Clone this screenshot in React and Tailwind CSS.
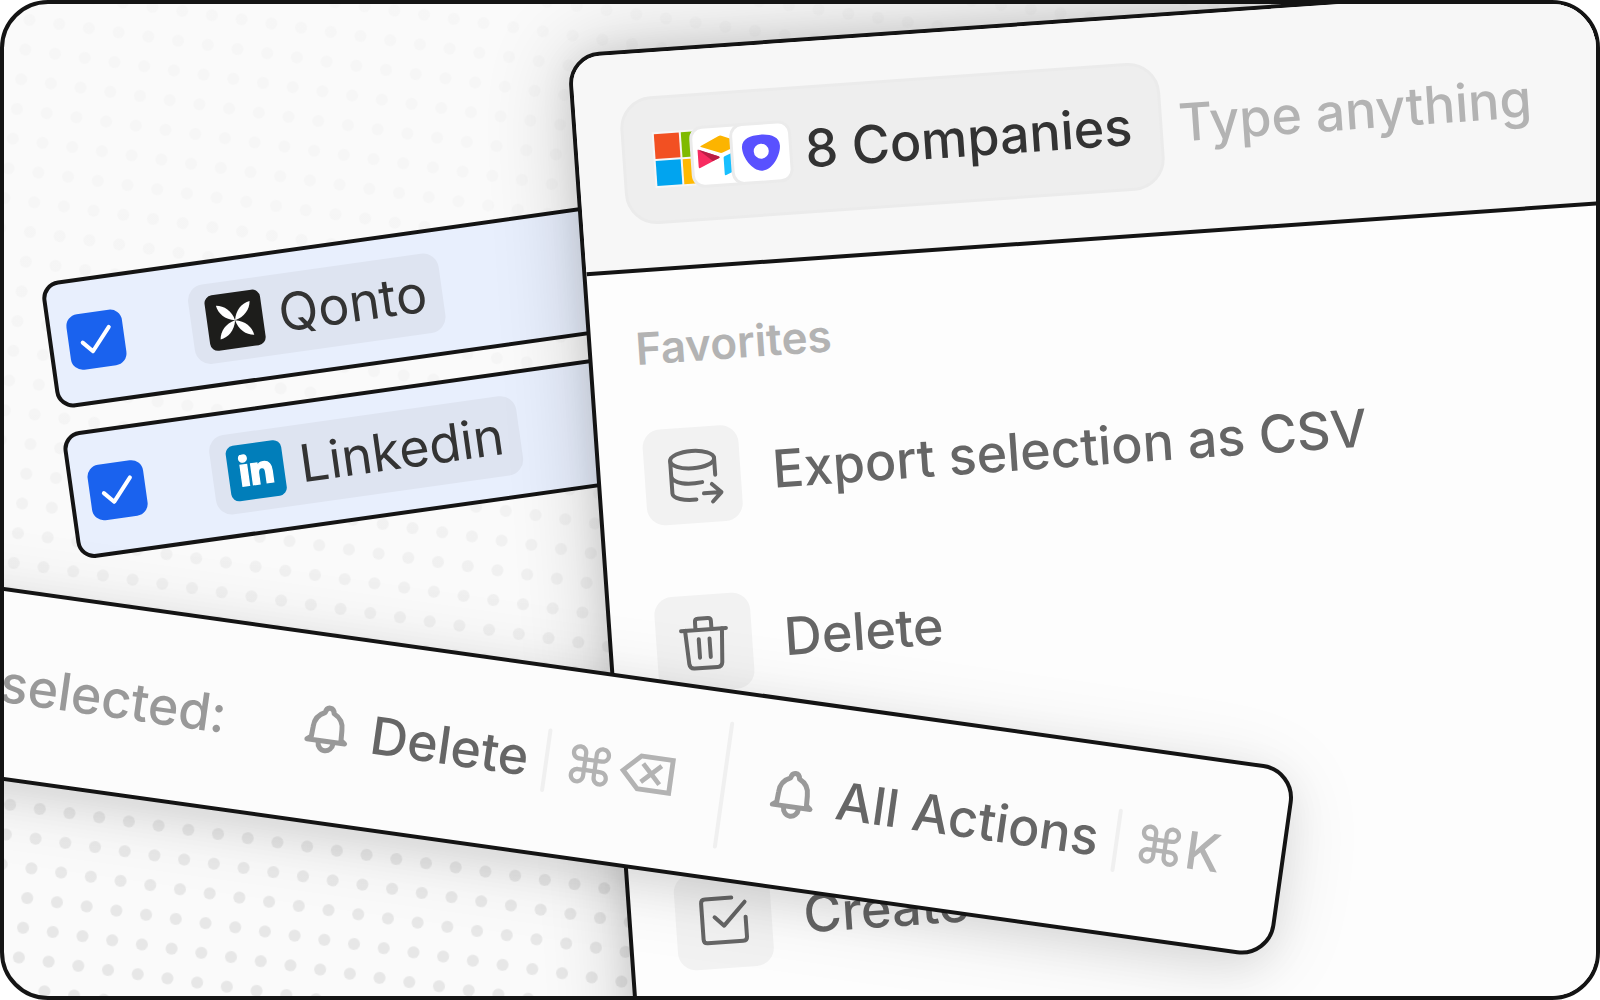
import React from "react";
import { FaLinkedinIn } from "react-icons/fa";

function DotGrid() {
  return (
    <svg className="absolute inset-0 h-full w-full" aria-hidden="true">
      <defs>
        <pattern
          id="dots"
          width="30"
          height="30"
          patternUnits="userSpaceOnUse"
          patternTransform="translate(23 788) rotate(8)"
        >
          <circle cx="15" cy="15" r="6" fill="#000" />
        </pattern>
        <linearGradient id="fade" x1="0" y1="0" x2="0" y2="1">
          <stop offset="0" stopColor="#fff" stopOpacity="0.015" />
          <stop offset="0.4" stopColor="#fff" stopOpacity="0.02" />
          <stop offset="0.9" stopColor="#fff" stopOpacity="0.075" />
        </linearGradient>
        <mask id="fadeMask">
          <rect width="100%" height="100%" fill="url(#fade)" />
        </mask>
      </defs>
      <rect width="100%" height="100%" fill="url(#dots)" mask="url(#fadeMask)" />
    </svg>
  );
}

function QontoLogo() {
  const petal = "M0 0C-10 -2 -16 -9 -17 -17C-9 -16 -2 -10 0 0Z";
  return (
    <svg viewBox="-28 -28 56 56" className="size-14 rounded-lg bg-[#1d1d1b]" aria-hidden="true">
      <g fill="#fff">
        <path d={petal} />
        <path d={petal} transform="rotate(90)" />
        <path d={petal} transform="rotate(180)" />
        <path d={petal} transform="rotate(270)" />
      </g>
    </svg>
  );
}

function LinkedinLogo() {
  return (
    <span className="flex size-14 items-center justify-center rounded-lg bg-[#017eba] text-white">
      <FaLinkedinIn className="size-9" stroke="currentColor" strokeWidth="20" aria-hidden="true" />
    </span>
  );
}

function SelectedRow({ name, logo }) {
  return (
    <label className="flex h-32 items-center gap-[68px] rounded-[18px] border-4 border-[#141414] bg-[#e8effd] pl-4">
      <span className="relative size-14 shrink-0">
        <input
          type="checkbox"
          defaultChecked
          className="block size-14 appearance-none rounded-xl bg-[#1a62ee]"
        />
        <svg
          viewBox="0 0 56 56"
          className="pointer-events-none absolute inset-0 size-14"
          fill="none"
          stroke="#fff"
          strokeWidth="4"
          strokeLinecap="round"
          strokeLinejoin="round"
          aria-hidden="true"
        >
          <path d="M14 29L23 39L42 17" />
        </svg>
      </span>
      <span className="flex h-20 items-center gap-4 rounded-2xl bg-[#dee4f1] px-4">
        {logo}
        <span className="text-[52px] leading-none text-[#333]">{name}</span>
      </span>
    </label>
  );
}

function MicrosoftLogo() {
  return (
    <svg viewBox="0 0 56 56" className="size-14 shrink-0 bg-[#f6f6f6]" aria-hidden="true">
      <path fill="#f25022" d="M2 2h25v25H2z" />
      <path fill="#7fba00" d="M29 2h25v25H29z" />
      <path fill="#01a4ef" d="M2 29h25v25H2z" />
      <path fill="#ffb901" d="M29 29h25v25H29z" />
    </svg>
  );
}

function AirtableLogo() {
  return (
    <svg viewBox="-28 -28 56 56" className="-ml-4 size-14 shrink-0 rounded-[10px] bg-white ring-3 ring-[#ebebeb]" aria-hidden="true">
      <path fill="#fcb400" d="M-20 -11L-2 -19.500Q0 -20.500 2 -19.500L20 -12Q21 -11 20 -10L2 -3Q0 -2 -2 -3L-20 -10Q-21 -10.500 -20 -11Z" />
      <path fill="#f82b60" d="M-23.500 -7.500L-3 0.500Q-1 1.500 -3 2.500L-22 11Q-23.500 11.500 -23.500 10Z" />
      <path fill="#ba1e45" d="M-23 -7.500L-3 0.500Q-1 1.500 -3 2.500L-9 5Z" />
      <path fill="#18bfff" d="M2 2.500Q2 1.500 3 1L22 -6.500V12L3 20Q2 20 2 19Z" />
    </svg>
  );
}

function OutreachLogo() {
  return (
    <svg viewBox="-28 -28 56 56" className="-ml-4 size-14 shrink-0 rounded-[10px] bg-white ring-3 ring-[#ebebeb]" aria-hidden="true">
      <path
        fill="#5951ff"
        fillRule="evenodd"
        d="M0 -18C10 -18 19 -15 19 -6C19 4 10 18 0 18C-10 18 -19 4 -19 -6C-19 -15 -10 -18 0 -18ZM0 -9A7.500 7.500 0 1 0 0 6A7.500 7.500 0 1 0 0 -9Z"
      />
    </svg>
  );
}

function LineIcon({ children }) {
  return (
    <span className="flex size-24 shrink-0 items-center justify-center rounded-[18px] bg-[#f2f2f2]">
      <svg
        viewBox="-32 -32 64 64"
        className="size-16"
        fill="none"
        stroke="#666"
        strokeWidth="4"
        strokeLinecap="round"
        strokeLinejoin="round"
        aria-hidden="true"
      >
        {children}
      </svg>
    </span>
  );
}

function Command({ label, children }) {
  return (
    <li>
      <button type="button" className="flex h-[168px] w-full items-center gap-8 text-left">
        <LineIcon>{children}</LineIcon>
        <span className="text-[52px] leading-[64px] font-medium text-[#666]">{label}</span>
      </button>
    </li>
  );
}

function CommandPanel() {
  return (
    <section className="absolute top-[50px] left-[563px] h-[1100px] w-[1120px] origin-top-left rotate-[-4deg] overflow-hidden rounded-[32px] border-4 border-[#141414] bg-[#fdfdfd] shadow-[0_0_32px_rgba(0,0,0,0.08),0_0_88px_rgba(0,0,0,0.2)]">
      <header className="flex h-[219px] items-center gap-4 border-b-4 border-[#141414] bg-[#f7f7f7] px-11">
        <div className="flex h-32 shrink-0 items-center gap-4 rounded-[32px] border-3 border-[#ebebeb] bg-[#eee] px-7">
          <div className="flex items-center">
            <MicrosoftLogo />
            <AirtableLogo />
            <OutreachLogo />
          </div>
          <span className="text-[52px] leading-[64px] font-medium text-[#333]">8 Companies</span>
        </div>
        <input
          type="text"
          aria-label="Search actions"
          placeholder="Type anything"
          className="min-w-0 flex-1 bg-transparent text-[52px] leading-[64px] font-medium text-[#333] placeholder:text-[#b3b3b3] focus:outline-none"
        />
      </header>
      <div className="px-11 pt-[52px]">
        <h2 className="mb-[22px] text-[44px] leading-[48px] font-semibold text-[#b3b3b3]">Favorites</h2>
        <ul>
          <Command label="Export selection as CSV">
            <ellipse cx="0.500" cy="-15.700" rx="22" ry="8.700" />
            <path d="M-21.500 -15.700V17C-21.500 22 -10 25 2 24.500M-21.500 0C-20 7 -6 9.500 9 7.500M22.500 -15.700V1" />
            <path d="M10 18.800H27.500M18.500 10L27.500 18.800L18.500 27.600" />
          </Command>
          <Command label="Delete">
            <path d="M-22.500 -13.300H22.500M-8 -13.300V-21.500Q-8 -24.500 -5 -24.500H5Q8 -24.500 8 -21.500V-13.300" />
            <path d="M-18.500 -13.300L-16.500 20.500Q-16 25 -11.500 25H11.500Q16 25 16.500 20.500L18.500 -13.300M-5.400 -4V14.500M5.400 -4V14.500" />
          </Command>
        </ul>
        <ul className="mt-[110px]">
          <Command label="Create">
            <path d="M9 -22H-17.500Q-21.500 -22 -21.500 -18V18Q-21.500 22 -17.500 22H18Q22 22 22 18V-2" />
            <path d="M-9 -3.500L0 5.500L22 -17" />
          </Command>
        </ul>
      </div>
    </section>
  );
}

function BellIcon() {
  return (
    <svg
      viewBox="-24 -24 48 48"
      className="size-12 shrink-0 overflow-visible"
      fill="none"
      stroke="#999"
      strokeWidth="5"
      strokeLinecap="round"
      strokeLinejoin="round"
      aria-hidden="true"
    >
      <path d="M-19 12L-15 9L-14.500 -1C-14.500 -9 -10 -14 -4.500 -16.500C-4 -20 -2.500 -21.500 0 -21.500C2.500 -21.500 4 -20 4.500 -16.500C10 -14 14.500 -9 14.500 -1L15 9L19 12Z" />
      <path d="M-7.500 13.500A7.500 8 0 0 0 7.500 13.500" />
    </svg>
  );
}

function ToolbarAction({ label, keys }) {
  return (
    <button type="button" className="flex shrink-0 items-center text-[52px] leading-[64px] font-medium">
      <BellIcon />
      <span className="ml-5 text-[#666]">{label}</span>
      <span className="mx-4 h-16 w-1 rounded-full bg-[#f0f0f0]" />
      <kbd className="font-['Inter',sans-serif] text-[#b3b3b3]">{keys}</kbd>
    </button>
  );
}

function SelectionBar() {
  return (
    <div className="absolute top-[570px] left-[-93px] flex h-48 w-[1400px] origin-top-left rotate-[8deg] items-center justify-end rounded-[34px] border-4 border-[#141414] bg-[#fcfcfc] pr-[60px] shadow-[0_12px_40px_rgba(0,0,0,0.08),0_12px_80px_rgba(0,0,0,0.1)]">
      <span className="mr-[78px] text-[52px] leading-[64px] font-medium text-[#999]">selected:</span>
      <ToolbarAction label="Delete" keys="⌘⌫" />
      <span className="mx-11 h-32 w-1 shrink-0 rounded-full bg-[#f0f0f0]" />
      <ToolbarAction label="All Actions" keys="⌘K" />
    </div>
  );
}

export default function App() {
  return (
    <main className="relative h-screen w-full overflow-hidden rounded-[48px] border-4 border-[#141414] bg-[#fafafa] font-['Inter',sans-serif]">
      <DotGrid />
      <div className="absolute top-[279px] left-[36px] flex w-[700px] origin-top-left rotate-[-8deg] flex-col gap-6">
        <SelectedRow name="Qonto" logo={<QontoLogo />} />
        <SelectedRow name="Linkedin" logo={<LinkedinLogo />} />
      </div>
      <CommandPanel />
      <SelectionBar />
    </main>
  );
}
